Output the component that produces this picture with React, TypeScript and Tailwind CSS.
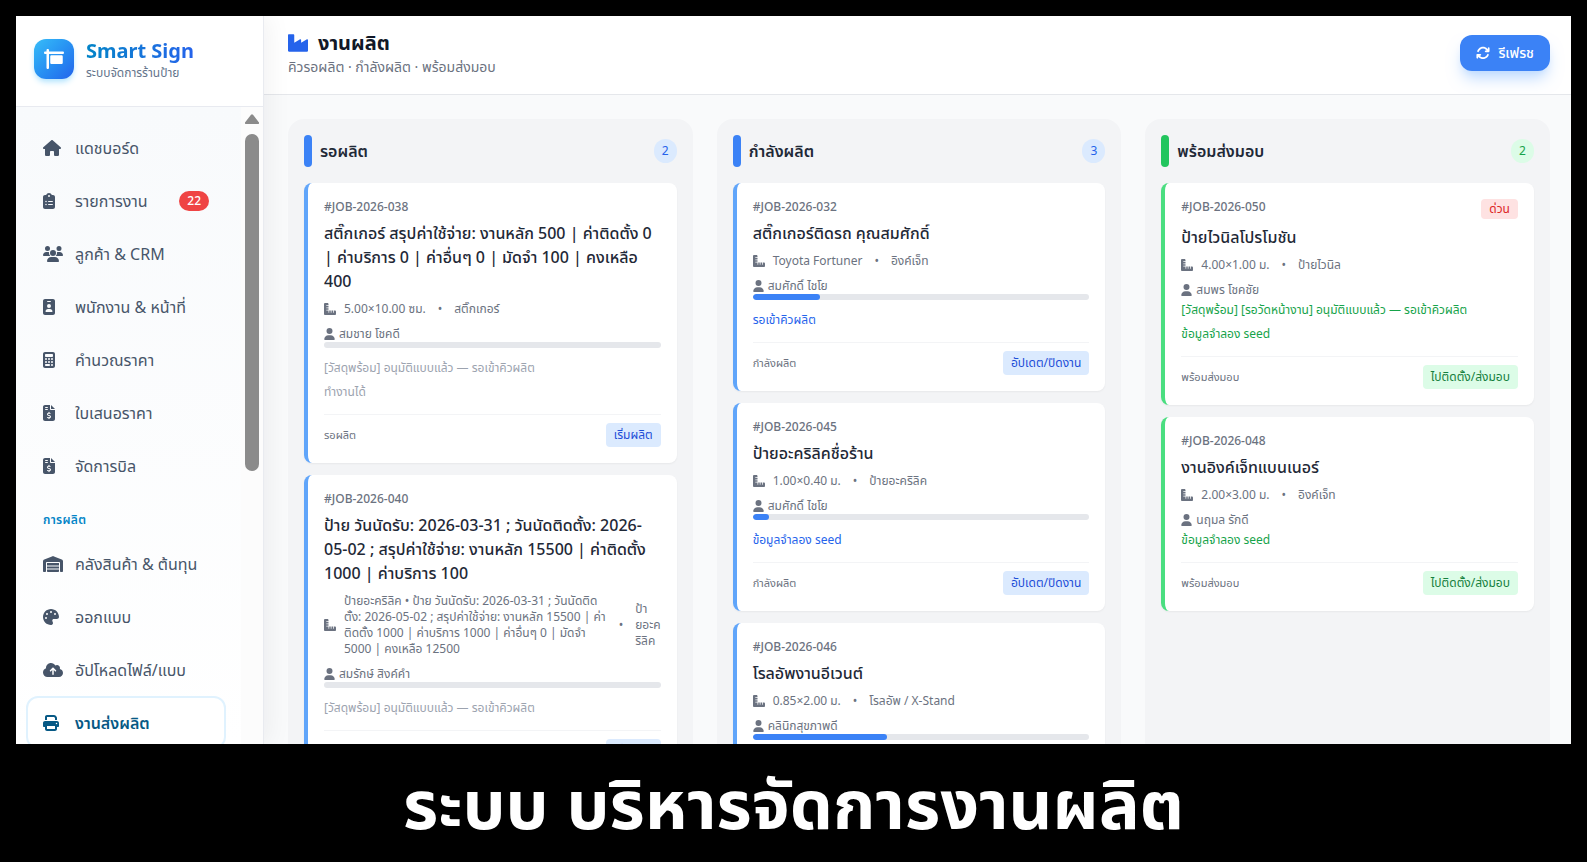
import type { IconType } from 'react-icons';
import { FaIndustry } from 'react-icons/fa';
import {
  FaArrowsRotate,
  FaCalculator,
  FaClipboardList,
  FaCloudArrowUp,
  FaFileInvoiceDollar,
  FaHouse,
  FaIdBadge,
  FaPalette,
  FaPrint,
  FaRulerCombined,
  FaSignHanging,
  FaUser,
  FaUsers,
  FaWarehouse,
} from 'react-icons/fa6';

interface NavItem {
  label: string;
  icon: IconType;
  iconWidth: string;
  badge?: number;
  active?: boolean;
}

interface Job {
  id: string;
  title: string;
  size: string;
  type: string;
  customer: string;
  progress?: number;
  notes: string[];
  urgent?: boolean;
}

interface Column {
  title: string;
  tone: 'waiting' | 'working' | 'ready';
  action: string;
  jobs: Job[];
}

// the icons share a height but not a width
const mainNav: NavItem[] = [
  { label: 'แดชบอร์ด', icon: FaHouse, iconWidth: 'w-[18px]' },
  { label: 'รายการงาน', icon: FaClipboardList, iconWidth: 'w-3', badge: 22 },
  { label: 'ลูกค้า & CRM', icon: FaUsers, iconWidth: 'w-5' },
  { label: 'พนักงาน & หน้าที่', icon: FaIdBadge, iconWidth: 'w-3' },
  { label: 'คำนวณราคา', icon: FaCalculator, iconWidth: 'w-3' },
  { label: 'ใบเสนอราคา', icon: FaFileInvoiceDollar, iconWidth: 'w-3' },
  { label: 'จัดการบิล', icon: FaFileInvoiceDollar, iconWidth: 'w-3' },
];

const productionNav: NavItem[] = [
  { label: 'คลังสินค้า & ต้นทุน', icon: FaWarehouse, iconWidth: 'w-5' },
  { label: 'ออกแบบ', icon: FaPalette, iconWidth: 'w-4' },
  { label: 'อัปโหลดไฟล์/แบบ', icon: FaCloudArrowUp, iconWidth: 'w-5' },
  { label: 'งานส่งผลิต', icon: FaPrint, iconWidth: 'w-4', active: true },
];

const columns: Column[] = [
  {
    title: 'รอผลิต',
    tone: 'waiting',
    action: 'เริ่มผลิต',
    jobs: [
      {
        id: '#JOB-2026-038',
        title: 'สติ๊กเกอร์ สรุปค่าใช้จ่าย: งานหลัก 500 | ค่าติดตั้ง 0 | ค่าบริการ 0 | ค่าอื่นๆ 0 | มัดจำ 100 | คงเหลือ 400',
        size: '5.00×10.00 ซม.',
        type: 'สติ๊กเกอร์',
        customer: 'สมชาย โชคดี',
        progress: 0,
        notes: ['[วัสดุพร้อม] อนุมัติแบบแล้ว — รอเข้าคิวผลิต', 'ทำงานได้'],
      },
      {
        id: '#JOB-2026-040',
        title: 'ป้าย วันนัดรับ: 2026-03-31 ; วันนัดติดตั้ง: 2026-05-02 ; สรุปค่าใช้จ่าย: งานหลัก 15500 | ค่าติดตั้ง 1000 | ค่าบริการ 100',
        size: 'ป้ายอะคริลิค • ป้าย วันนัดรับ: 2026-03-31 ; วันนัดติดตั้ง: 2026-05-02 ; สรุปค่าใช้จ่าย: งานหลัก 15500 | ค่าติดตั้ง 1000 | ค่าบริการ 1000 | ค่าอื่นๆ 0 | มัดจำ 5000 | คงเหลือ 12500',
        type: 'ป้ายอะคริลิค',
        customer: 'สมรักษ์ สิงค์คำ',
        progress: 0,
        notes: ['[วัสดุพร้อม] อนุมัติแบบแล้ว — รอเข้าคิวผลิต'],
      },
    ],
  },
  {
    title: 'กำลังผลิต',
    tone: 'working',
    action: 'อัปเดต/ปิดงาน',
    jobs: [
      {
        id: '#JOB-2026-032',
        title: 'สติ๊กเกอร์ติดรถ คุณสมศักดิ์',
        size: 'Toyota Fortuner',
        type: 'อิงค์เจ็ท',
        customer: 'สมศักดิ์ ไชโย',
        progress: 20,
        notes: ['รอเข้าคิวผลิต'],
      },
      {
        id: '#JOB-2026-045',
        title: 'ป้ายอะคริลิคชื่อร้าน',
        size: '1.00×0.40 ม.',
        type: 'ป้ายอะคริลิค',
        customer: 'สมศักดิ์ ไชโย',
        progress: 5,
        notes: ['ข้อมูลจำลอง seed'],
      },
      {
        id: '#JOB-2026-046',
        title: 'โรลอัพงานอีเวนต์',
        size: '0.85×2.00 ม.',
        type: 'โรลอัพ / X-Stand',
        customer: 'คลินิกสุขภาพดี',
        progress: 40,
        notes: [],
      },
    ],
  },
  {
    title: 'พร้อมส่งมอบ',
    tone: 'ready',
    action: 'ไปติดตั้ง/ส่งมอบ',
    jobs: [
      {
        id: '#JOB-2026-050',
        title: 'ป้ายไวนิลโปรโมชัน',
        size: '4.00×1.00 ม.',
        type: 'ป้ายไวนิล',
        customer: 'สมพร โชคชัย',
        notes: ['[วัสดุพร้อม] [รอวัดหน้างาน] อนุมัติแบบแล้ว — รอเข้าคิวผลิต', 'ข้อมูลจำลอง seed'],
        urgent: true,
      },
      {
        id: '#JOB-2026-048',
        title: 'งานอิงค์เจ็ทแบนเนอร์',
        size: '2.00×3.00 ม.',
        type: 'อิงค์เจ็ท',
        customer: 'นฤมล รักดี',
        notes: ['ข้อมูลจำลอง seed'],
      },
    ],
  },
];

const tones = {
  waiting: {
    bar: 'bg-[#3b82f6]',
    count: 'bg-[#dbeafe] text-[#2563eb]',
    card: 'border-[#60a5fa]',
    note: 'text-[#9ca3af]',
    action: 'bg-[#dbeafe] text-[#1d4ed8]',
  },
  working: {
    bar: 'bg-[#3b82f6]',
    count: 'bg-[#dbeafe] text-[#2563eb]',
    card: 'border-[#60a5fa]',
    note: 'text-[#2563eb]',
    action: 'bg-[#dbeafe] text-[#1d4ed8]',
  },
  ready: {
    bar: 'bg-[#22c55e]',
    count: 'bg-[#dcfce7] text-[#16a34a]',
    card: 'border-[#4ade80]',
    note: 'text-[#16a34a]',
    action: 'bg-[#dcfce7] text-[#15803d]',
  },
};

const NavLink = ({ item }: { item: NavItem }) => {
  const Icon = item.icon;
  return (
    <a
      href="#"
      className={
        item.active
          ? 'flex h-[53px] items-center rounded-xl border-2 border-[#e0f2fe] bg-white px-[15px] font-semibold text-[#075985]'
          : 'flex h-[53px] items-center rounded-xl border-2 border-transparent px-[15px] text-[#475569]'
      }
    >
      <span className="w-8 shrink-0">
        <Icon className={`h-4 ${item.iconWidth}`} />
      </span>
      {item.label}
      {item.badge && (
        <span className="ml-auto rounded-full bg-[#ef4444] px-2 text-xs leading-5 font-medium text-white">{item.badge}</span>
      )}
    </a>
  );
};

const Sidebar = () => (
  <aside className="z-10 flex w-[248px] shrink-0 flex-col border-r border-[#e9ebf0] bg-white shadow-[4px_0_24px_rgba(15,23,42,0.06)]">
    <div className="flex h-[91px] shrink-0 items-center gap-3 border-b border-[#e8eaf0] px-[18px] pb-1">
      <div className="flex size-10 items-center justify-center rounded-xl bg-linear-to-br from-[#38bdf8] to-[#2563eb] text-white shadow-md shadow-sky-200">
        <FaSignHanging className="size-5" />
      </div>
      <div>
        <div className="bg-linear-to-r from-[#0284c7] to-[#2563eb] bg-clip-text text-xl leading-7 font-bold text-transparent">
          Smart Sign
        </div>
        <div className="text-xs leading-4 text-[#64748b]">ระบบจัดการร้านป้าย</div>
      </div>
    </div>
    <div className="flex min-h-0 flex-1">
      <nav className="min-w-0 flex-1 overflow-hidden bg-linear-to-b from-[#f8fafc] to-white py-[14px] pr-[15px] pl-[10px]">
        {mainNav.map((item) => (
          <NavLink key={item.label} item={item} />
        ))}
        <div className="flex h-[45px] items-center px-[17px] pt-[10px] text-xs font-semibold tracking-wide text-[#0284c7]">
          การผลิต
        </div>
        {productionNav.map((item) => (
          <NavLink key={item.label} item={item} />
        ))}
      </nav>
      <div className="flex w-[22px] flex-col items-center gap-[10px] bg-[#fcfcfc] pt-[7px]" aria-hidden="true">
        <svg className="h-[10px] w-[14px] fill-[#8b8b8b]" viewBox="0 0 14 10">
          <path d="M6 .7a1.4 1.4 0 0 1 2 0l5.600 7.300a1.100 1.100 0 0 1-.9 2H1.300a1.100 1.100 0 0 1-.9-2z" />
        </svg>
        <div className="h-[337px] w-[14px] rounded-full bg-[#8b8b8b]" />
      </div>
    </div>
  </aside>
);

const JobCard = ({ job, column }: { job: Job; column: Column }) => {
  const tone = tones[column.tone];
  return (
    <article className={`rounded-lg border-l-4 bg-white p-4 shadow-xs ${tone.card}`}>
      <div className="flex items-start justify-between">
        <span className="text-xs leading-4 font-medium text-[#6b7280]">{job.id}</span>
        {job.urgent && <span className="rounded-sm bg-[#fee2e2] px-2 text-xs leading-5 text-[#dc2626]">ด่วน</span>}
      </div>
      <h3 className="mt-[6px] text-base leading-6 font-medium text-[#1f2937]">{job.title}</h3>
      <div className="mt-2 flex items-center gap-2 text-xs leading-4 text-[#6b7280]">
        <FaRulerCombined className="size-3 shrink-0" />
        <span>{job.size}</span>
        <span className="mx-1">•</span>
        <span>{job.type}</span>
      </div>
      <div className="mt-2 flex h-[17px] items-center gap-1 text-xs leading-4 text-[#6b7280]">
        <FaUser className="h-3 w-[11px]" />
        {job.customer}
      </div>
      {job.progress !== undefined && (
        <div className="mb-2 h-[6px] overflow-hidden rounded-full bg-[#e5e7eb]">
          <div className="h-full rounded-full bg-[#3b82f6]" style={{ width: `${job.progress}%` }} />
        </div>
      )}
      <div className={`text-xs leading-6 ${tone.note}`}>
        {job.notes.map((note) => (
          <p key={note}>{note}</p>
        ))}
      </div>
      <div className="mt-[10px] flex items-center justify-between border-t border-[#f3f4f6] pt-2">
        <span className="text-[11px] leading-4 text-[#6b7280]">{column.title}</span>
        <button type="button" className={`h-6 rounded-sm px-2 text-xs ${tone.action}`}>
          {column.action}
        </button>
      </div>
    </article>
  );
};

const BoardColumn = ({ column }: { column: Column }) => {
  const tone = tones[column.tone];
  return (
    <section className="min-w-0 rounded-2xl bg-[#f3f4f6] p-4">
      <div className="mb-4 flex items-center gap-2">
        <span className={`h-8 w-2 rounded-full ${tone.bar}`} />
        <h2 className="text-base leading-6 font-semibold text-[#1f2937]">{column.title}</h2>
        <span className={`ml-auto rounded-full px-2 text-xs leading-6 ${tone.count}`}>{column.jobs.length}</span>
      </div>
      <div className="flex flex-col gap-3">
        {column.jobs.map((job) => (
          <JobCard key={job.id} job={job} column={column} />
        ))}
      </div>
    </section>
  );
};

export default function App() {
  return (
    <div className="flex h-screen flex-col bg-black px-4 pt-4 font-['Noto_Sans','Noto_Sans_Thai',sans-serif]">
      <div className="flex min-h-0 flex-1 overflow-hidden bg-[#f9fafb]">
        <Sidebar />
        <div className="flex min-w-0 flex-1 flex-col">
          <header className="flex h-[79px] shrink-0 items-center justify-between border-b border-[#e5e7eb] bg-white pr-[21px] pb-1 pl-6">
            <div>
              <h1 className="flex items-center gap-[10px] text-xl leading-7 font-bold text-[#111827]">
                <FaIndustry className="size-5 text-[#2563eb]" />
                งานผลิต
              </h1>
              <p className="text-sm leading-5 text-[#6b7280]">คิวรอผลิต · กำลังผลิต · พร้อมส่งมอบ</p>
            </div>
            <button
              type="button"
              className="flex h-9 items-center gap-2 rounded-xl bg-[#3b82f6] px-4 text-sm font-medium text-white shadow-lg shadow-blue-200"
            >
              <FaArrowsRotate className="size-[14px]" />
              รีเฟรช
            </button>
          </header>
          <main className="grid min-h-0 flex-1 grid-cols-3 gap-6 pt-6 pr-[21px] pl-6">
            {columns.map((column) => (
              <BoardColumn key={column.title} column={column} />
            ))}
          </main>
        </div>
      </div>
      <p className="flex h-[118px] shrink-0 items-center justify-center text-[68px] leading-[96px] font-bold text-white">
        ระบบ บริหารจัดการงานผลิต
      </p>
    </div>
  );
}
